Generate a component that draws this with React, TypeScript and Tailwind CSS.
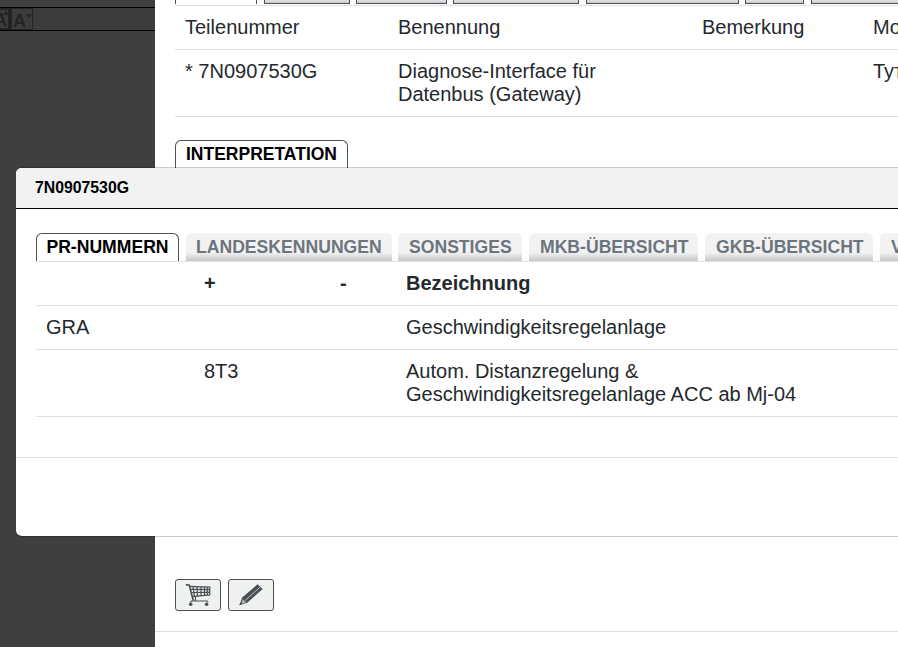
import React from "react";

const cutTabs = [
  { w: "w-[82px]", active: true },
  { w: "w-[86px] ml-[7px]", active: false },
  { w: "w-[91px] ml-[6px]", active: false },
  { w: "w-[126px] ml-[6px]", active: false },
  { w: "w-[153px] ml-[7px]", active: false },
  { w: "w-[59px] ml-[6px]", active: false },
  { w: "w-[120px] ml-[7px]", active: false },
];

const modalTabs = [
  { label: "LANDESKENNUNGEN", w: "w-[206px] ml-[7px] pl-[10px]" },
  { label: "SONSTIGES", w: "w-[124px] ml-[6px] pl-[11px]" },
  { label: "MKB-ÜBERSICHT", w: "w-[169px] ml-[7px] pl-[11px]" },
  { label: "GKB-ÜBERSICHT", w: "w-[168px] ml-[7px] pl-[11px]" },
  { label: "VARIANTEN", w: "w-[130px] ml-[7px] pl-[11px]" },
];

function CartIcon() {
  return (
    <svg width="28" height="26" viewBox="0 0 28 26" fill="none" stroke="#4a5155" className="shrink-0">
      <path d="M1.800 2.600L5.300 3.200L9.300 18.800" strokeWidth="1.600" />
      <path d="M5.600 4.300L25.700 5.200V13L8 14.600" strokeWidth="1.300" />
      <path d="M6.300 7.300l19.400.4M7 10.500l18.700-.2M9 4.600l1.500 9.800M13 4.800l.5 9.400M17 5v9M20.500 5.100v8.500M23.300 5.100v8" strokeWidth="1.200" />
      <path d="M11.500 14.500v4.500M6 20.300l1.500-1.300h15.500l1.200 1" strokeWidth="1.100" />
      <circle cx="6.700" cy="22.200" r="1.800" fill="#4a5155" stroke="none" />
      <circle cx="22.600" cy="22.200" r="1.800" fill="#4a5155" stroke="none" />
    </svg>
  );
}

function PencilIcon() {
  return (
    <svg width="28" height="26" viewBox="0 0 28 26" className="shrink-0">
      <path d="M2.400 23.300L5.200 15.600L20.600 2.300L25.700 7L10.500 20.600z" fill="#4a5155" />
      <path d="M5.700 17.300L9 20.300L4.400 21.800z" fill="#b5b9b9" />
      <path d="M8.300 18.400L23.500 4.700" stroke="#c9cdcb" strokeWidth=".9" />
      <path d="M2.400 23.300l.9-2.600 1.700 1.700z" fill="#4a5155" />
    </svg>
  );
}

function SizeButton({ up }: { up: boolean }) {
  return (
    <span className={`flex h-[22px] w-[22px] shrink-0 border-[#242424] leading-none text-[#202323] ${up ? "border-y-2 border-r-[3px] pl-[5px]" : "border border-[#2c2c2c] pl-px"}`}>
      <span className={`text-[18px] font-bold leading-[18px] ${up ? "mt-px" : "mt-[3px]"}`}>A</span>
      <svg width="6" height="4" viewBox="0 0 6 4" className={`shrink-0 ${up ? "-ml-1 mt-px" : "mt-[5px]"}`}>
        <path d={up ? "M0 4L3 0L6 4z" : "M0 0h6L3 4z"} fill="#202323" />
      </svg>
    </span>
  );
}

export default function App() {
  return (
    <div className="relative flex h-[647px] w-[898px] overflow-hidden bg-white font-['Liberation_Sans',Arial,sans-serif] text-[20px] leading-[23px] text-[#24292d]">
      <aside className="w-[155px] shrink-0 overflow-hidden bg-[#3f3f3f] pt-[7px]">
        <div className="flex h-6 items-center border-y border-black bg-[#3c3c3c]">
          <div className="-ml-[11px] flex shrink-0">
            <SizeButton up />
            <SizeButton up={false} />
          </div>
        </div>
      </aside>

      <main className="w-[743px] shrink-0 overflow-hidden">
        <div className="ml-5 flex h-[5px] overflow-hidden">
          {cutTabs.map((t, i) => (
            <span
              key={i}
              className={`${t.w} h-1 shrink-0 border-x border-[#495057] ${t.active ? "bg-white" : "border-b bg-linear-to-b from-[#e4e4e4] to-[#c8c8c8]"}`}
            />
          ))}
        </div>
        <div className="ml-5 whitespace-nowrap border-t border-[#dee2e6]">
          <div className="grid h-11 grid-cols-[213px_304px_171px_120px] border-b border-[#dedfe0] pl-[10px] pt-[10px]">
            <span>Teilenummer</span>
            <span>Benennung</span>
            <span>Bemerkung</span>
            <span>Modell</span>
          </div>
          <div className="grid h-[67px] grid-cols-[213px_304px_171px_120px] border-b border-[#dedfe0] pl-[10px] pt-[10px]">
            <span>* 7N0907530G</span>
            <span>Diagnose-Interface für<br />Datenbus (Gateway)</span>
            <span />
            <span>Тут</span>
          </div>
        </div>
        <div className="ml-5 mt-[23px] flex h-[40px] w-[173px] justify-center rounded-t-[6px] border border-b-0 border-[#495057] pt-[3px] text-[17.500px] font-bold leading-5 text-black">
          INTERPRETATION
        </div>
        <div className="ml-5 mt-[399px] flex gap-[7px]">
          <button className="flex h-8 w-[46px] items-center justify-center rounded-[3px] border border-[#495057] bg-[#eff1ef]"><CartIcon /></button>
          <button className="flex h-8 w-[46px] items-center justify-center rounded-[3px] border border-[#495057] bg-[#eff1ef]"><PencilIcon /></button>
        </div>
        <div className="mt-5 border-t border-[#dedfe0]" />
      </main>

      <section className="absolute left-4 top-[167px] h-[370px] w-[940px] overflow-hidden rounded-[6px] border border-l-0 border-black/20 bg-white bg-clip-padding">
        <header className="flex h-[41px] items-center border-b border-black bg-[#f2f2f2] pb-[2px] pl-[19px] text-[15.800px] font-bold text-black">
          <span>7N0907530G</span>
        </header>
        <div className="ml-5 mt-6 flex h-[28px] text-[17.600px] font-bold leading-5">
          <span className="flex h-[28px] w-[143px] shrink-0 justify-center rounded-t-[6px] border border-b-0 border-[#495057] pt-[3px] text-black">PR-NUMMERN</span>
          {modalTabs.map((t) => (
            <span
              key={t.label}
              className={`${t.w} flex h-[28px] shrink-0 whitespace-nowrap rounded-t-[6px] bg-linear-to-b from-[#f2f2f2] from-70% to-[#c6c6c8] pt-1 text-[#6c757d]`}
            >
              {t.label}
            </span>
          ))}
        </div>
        <div className="ml-5 whitespace-nowrap border-t border-[#dee2e6]">
          <div className="grid h-11 grid-cols-[158px_136px_66px_500px] border-b border-[#dedfe0] pl-[10px] pt-[10px] font-bold">
            <span />
            <span>+</span>
            <span>-</span>
            <span>Bezeichnung</span>
          </div>
          <div className="grid h-11 grid-cols-[158px_202px_500px] border-b border-[#dedfe0] pl-[10px] pt-[10px]">
            <span>GRA</span>
            <span />
            <span>Geschwindigkeitsregelanlage</span>
          </div>
          <div className="grid h-[67px] grid-cols-[158px_202px_500px] border-b border-[#dedfe0] pl-[10px] pt-[10px]">
            <span />
            <span>8T3</span>
            <span>Autom. Distanzregelung &amp;<br />Geschwindigkeitsregelanlage ACC ab Mj-04</span>
          </div>
        </div>
        <footer className="mt-10 border-t border-[#dedfe0]" />
      </section>
    </div>
  );
}
